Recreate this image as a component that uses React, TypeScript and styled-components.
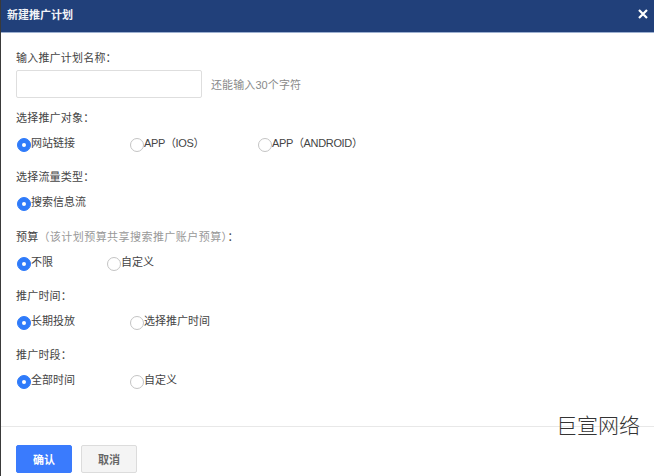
import React, { FC } from "react";
import styled, { createGlobalStyle } from "styled-components";

const GlobalStyle = createGlobalStyle`
  html, body {
    margin: 0;
    padding: 0;
    background: #fff;
  }
  body {
    font-family: "Liberation Sans", "Noto Sans CJK SC", sans-serif;
  }
`;

const Dialog = styled.div`
  position: relative;
  width: 654px;
  height: 476px;
  box-sizing: border-box;
  border-left: 1px solid #3a3a3a;
  overflow: hidden;
  display: flex;
  flex-direction: column;
`;

const Header = styled.div`
  height: 33px;
  flex: none;
  box-sizing: border-box;
  background: #21407a;
  border-bottom: 1px solid #9db0d0;
  display: flex;
  align-items: center;
  justify-content: space-between;
  padding: 0 6px 4px 6px;
`;

const Title = styled.span`
  color: #f2f4f8;
  font-size: 11px;
  font-weight: 700;
`;

const Close = styled.svg`
  width: 10px;
  height: 10px;
`;

const Body = styled.div`
  flex: 1;
  padding: 18px 0 0 15px;
`;

const Label = styled.div`
  color: #444;
  font-size: 11px;
  line-height: 14px;
  letter-spacing: 0.2px;
`;

const Hint = styled.span`
  color: #999;
  letter-spacing: 0.45px;
`;

const NameRow = styled.div`
  display: flex;
  align-items: center;
  gap: 9px;
  margin: 5px 0 13px;
`;

const NameInput = styled.input`
  width: 186px;
  height: 28px;
  box-sizing: border-box;
  background: #fff;
  border: 1px solid #dedede;
  border-radius: 2px;
  outline: none;
`;

const Counter = styled.span`
  color: #8a8a8a;
  font-size: 11px;
  letter-spacing: 0.1px;
`;

const RadioRow = styled.div`
  display: flex;
  align-items: center;
  height: 18px;
  margin: 10px 0 17.3px;
`;

const RadioItem = styled.div<{ $width: number }>`
  display: flex;
  align-items: center;
  width: ${(p) => p.$width}px;
`;

const Dot = styled.span<{ $on?: boolean }>`
  width: 14px;
  height: 14px;
  flex: none;
  box-sizing: border-box;
  margin: 2px 0 0 1px;
  border-radius: 50%;
  background: ${(p) => (p.$on ? "#2f7bfa" : "#fff")};
  border: 1px solid ${(p) => (p.$on ? "#2f7bfa" : "#c4c4c4")};
  display: flex;
  align-items: center;
  justify-content: center;
  &::after {
    content: "";
    display: ${(p) => (p.$on ? "block" : "none")};
    width: 4px;
    height: 4px;
    border-radius: 50%;
    background: #fff;
  }
`;

const RadioText = styled.span<{ $latin?: boolean }>`
  color: #444;
  font-size: 11px;
  line-height: 14px;
  white-space: nowrap;
  margin-top: -2px;
  letter-spacing: ${(p) => (p.$latin ? "-0.35px" : "0")};
`;

const Footer = styled.div`
  flex: none;
  height: 50px;
  box-sizing: border-box;
  border-top: 1px solid #e8e8e8;
  display: flex;
  gap: 9px;
  padding: 18px 0 0 15px;
`;

const Button = styled.button<{ $primary?: boolean }>`
  width: 56px;
  height: 28px;
  box-sizing: border-box;
  border-radius: 2px;
  font-family: inherit;
  font-size: 11px;
  font-weight: 700;
  padding: 0;
  background: ${(p) => (p.$primary ? "#3a7bfd" : "#f4f4f4")};
  border: 1px solid ${(p) => (p.$primary ? "#3a7bfd" : "#dcdcdc")};
  color: ${(p) => (p.$primary ? "#fff" : "#666")};
`;

const Watermark = styled.div`
  position: absolute;
  top: 411px;
  left: 555px;
  color: #333;
  font-size: 21px;
  line-height: 26px;
  font-family: "Noto Sans CJK SC", sans-serif;
  font-weight: 300;
`;

type Option = { text: string; width: number; on?: boolean; latin?: boolean };

const Radios: FC<{ options: Option[] }> = ({ options }) => (
  <RadioRow>
    {options.map((o) => (
      <RadioItem key={o.text} $width={o.width}>
        <Dot $on={o.on} />
        <RadioText $latin={o.latin}>{o.text}</RadioText>
      </RadioItem>
    ))}
  </RadioRow>
);

const App: FC = () => (
  <>
    <GlobalStyle />
    <Dialog>
      <Header>
        <Title>新建推广计划</Title>
        <Close viewBox="0 0 10 10">
          <path d="M1 1L9 9M9 1L1 9" stroke="#fff" strokeWidth="2.2" />
        </Close>
      </Header>
      <Body>
        <Label>输入推广计划名称：</Label>
        <NameRow>
          <NameInput />
          <Counter>还能输入30个字符</Counter>
        </NameRow>
        <Label>选择推广对象：</Label>
        <Radios
          options={[
            { text: "网站链接", width: 113, on: true },
            { text: "APP（IOS）", width: 128, latin: true },
            { text: "APP（ANDROID）", width: 120, latin: true },
          ]}
        />
        <Label>选择流量类型：</Label>
        <Radios options={[{ text: "搜索信息流", width: 113, on: true }]} />
        <Label>
          预算<Hint>（该计划预算共享搜索推广账户预算）</Hint>：
        </Label>
        <Radios
          options={[
            { text: "不限", width: 90, on: true },
            { text: "自定义", width: 100 },
          ]}
        />
        <Label>推广时间：</Label>
        <Radios
          options={[
            { text: "长期投放", width: 113, on: true },
            { text: "选择推广时间", width: 120 },
          ]}
        />
        <Label>推广时段：</Label>
        <Radios
          options={[
            { text: "全部时间", width: 113, on: true },
            { text: "自定义", width: 100 },
          ]}
        />
      </Body>
      <Footer>
        <Button $primary>确认</Button>
        <Button>取消</Button>
      </Footer>
      <Watermark>巨宣网络</Watermark>
    </Dialog>
  </>
);

export default App;
